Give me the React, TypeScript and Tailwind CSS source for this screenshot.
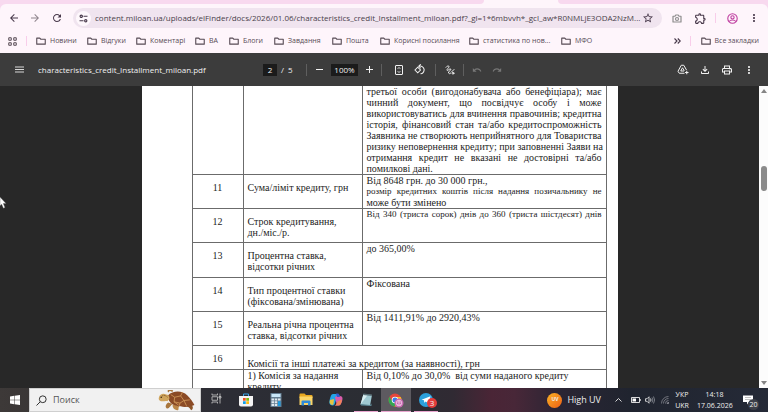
import type { ReactNode } from 'react';
import {
  MdArrowBack,
  MdArrowForward,
  MdMoreVert,
  MdOutlineExtension,
  MdOutlineFileDownload,
  MdOutlinePrint,
  MdRedo,
  MdRefresh,
  MdStarBorder,
  MdUndo,
} from 'react-icons/md';

const FolderIcon = () => (
  <svg viewBox="0 0 20 16" className="h-2 w-2.5 shrink-0" fill="none" stroke="#574b55" strokeWidth="2.2">
    <path d="M1.5 2.2h6l2.2 2.3h8.8v9.8h-17z" strokeLinejoin="round" />
  </svg>
);

const bookmarks = [
  { label: 'Новини', width: 'w-[51px]' },
  { label: 'Відгуки', width: 'w-[49px]' },
  { label: 'Коментарі', width: 'w-[59px]' },
  { label: 'ВА', width: 'w-[34px]' },
  { label: 'Блоги', width: 'w-[45px]' },
  { label: 'Завдання', width: 'w-[58px]' },
  { label: 'Пошта', width: 'w-[48px]' },
  { label: 'Корисні посилання', width: 'w-[89px]' },
  { label: 'статистика по нов...', width: 'w-[92px]' },
  { label: 'МФО', width: 'w-[51px]' },
];

const BrowserHeader = () => (
  <header className="bg-[#f8d9ef] text-[#574b55]">
    <div className="flex h-1 bg-[#fef5fb]">
      <div className="w-[63%] rounded-br-[4px] bg-[#f8d9ef]" />
      <div className="w-[74px]" />
      <div className="flex-1 rounded-bl-[4px] bg-[#f8d9ef]" />
    </div>
    <div className="rounded-t-[6px] bg-[#fef5fb]">
      <div className="flex h-[28px] items-center pl-2 pr-2">
        <button aria-label="Back" className="mr-2 w-[13px] text-[#47384a]"><MdArrowBack size={12} /></button>
        <button aria-label="Forward" className="mr-[9px] w-[13px] text-[#8f858d]"><MdArrowForward size={12} /></button>
        <button aria-label="Reload" className="mr-[9px] w-[13px] text-[#47384a]"><MdRefresh size={12} /></button>
        <div className="flex h-5 flex-1 items-center rounded-full bg-[#f0e4ef] pl-[3px] pr-2">
          <button aria-label="Site information" className="flex size-[15px] items-center justify-center rounded-full bg-[#fef8fc]">
            <svg viewBox="0 0 18 18" className="size-[9px]" fill="none" stroke="#47384a" strokeWidth="2.2">
              <circle cx="4.5" cy="4.5" r="2.3" />
              <path d="M9 4.5h8M1 13.5h8" />
              <circle cx="13.5" cy="13.5" r="2.3" />
            </svg>
          </button>
          <input
            aria-label="Address"
            defaultValue="content.miloan.ua/uploads/elFinder/docs/2026/01.06/characteristics_credit_Installment_miloan.pdf?_gl=1*6mbvvh*_gcl_aw*R0NMLjE3ODA2NzM..."
            className="ml-1 min-w-0 flex-1 bg-transparent text-[8px] text-[#4a3f4b] outline-none"
          />
          <button aria-label="Bookmark this page" className="text-[#47384a]"><MdStarBorder size={12} /></button>
        </div>
        <button aria-label="Screenshot" className="ml-[10px]">
          <svg viewBox="0 0 20 18" className="h-[9px] w-[10px]" fill="none" stroke="#8d8d8d" strokeWidth="2.4">
            <path d="M2 4.5h4l1.500-2.500h5L14 4.500h4v11.500H2z" strokeLinejoin="round" />
            <circle cx="10" cy="10" r="3" />
          </svg>
        </button>
        <button aria-label="Extensions" className="ml-[12px] text-[#47384a]"><MdOutlineExtension size={13} /></button>
        <span className="ml-2 h-[10px] w-px bg-[#f8cdea]" />
        <button aria-label="Profile" className="ml-[11px]">
          <svg viewBox="0 0 24 24" className="size-[11px]" fill="none" stroke="#bf3fa0" strokeWidth="2.4">
            <circle cx="12" cy="12" r="10.3" />
            <circle cx="12" cy="9.5" r="3.6" />
            <path d="M4.500 18.500c3.500-4.200 11.500-4.200 15 0" />
          </svg>
        </button>
        <button aria-label="Menu" className="ml-[10px] text-[#47384a]"><MdMoreVert size={12} /></button>
      </div>
      <nav aria-label="Bookmarks" className="flex h-[21px] items-start pl-2 pr-[9px] pt-px text-[7px] leading-4">
        <button aria-label="Apps" className="mr-[9px] flex h-4 items-center">
          <svg viewBox="0 0 18 18" className="size-[9px]" fill="none" stroke="#574b55" strokeWidth="2">
            <path d="M1.500 1.500h5v5h-5zM11.500 1.500h5v5h-5zM1.500 11.500h5v5h-5zM11.500 11.500h5v5h-5z" />
          </svg>
        </button>
        <span className="mr-[9px] mt-[3px] h-[10px] w-px bg-[#f8cdea]" />
        {bookmarks.map(({ label, width }) => (
          <a key={label} href="#bookmark" className={`flex h-4 shrink-0 items-center gap-1 whitespace-nowrap ${width}`}>
            <FolderIcon />
            {label}
          </a>
        ))}
        <button aria-label="More bookmarks" className="ml-auto mr-[9px] flex h-4 items-center">
          <svg viewBox="0 0 14 12" className="h-[6px] w-[7px]" fill="none" stroke="#47384a" strokeWidth="2.2">
            <path d="M1 1l5 5-5 5M7.500 1l5 5-5 5" />
          </svg>
        </button>
        <span className="mr-[10px] mt-[3px] h-[10px] w-px bg-[#f8cdea]" />
        <a href="#all" className="flex h-4 items-center gap-1 whitespace-nowrap">
          <FolderIcon />
          Все закладки
        </a>
      </nav>
    </div>
  </header>
);

const Divider = () => <span className="h-3 w-px bg-[#5f5f5f]" />;

const PdfToolbar = () => (
  <div className="flex h-[33px] shrink-0 items-center bg-[#3c3c3c] pl-[15px] pr-[13px] text-[#f1f1f1]">
    <div className="flex w-[248px] items-center gap-[14px]">
      <button aria-label="Toggle sidebar">
        <svg viewBox="0 0 18 14" className="h-[7px] w-[9px]" stroke="#d8d8d8" strokeWidth="2.2">
          <path d="M0 2h18M0 7h18M0 12h18" />
        </svg>
      </button>
      <h1 className="text-[8px] font-medium">characteristics_credit_Installment_miloan.pdf</h1>
    </div>
    <input aria-label="Page" defaultValue="2" className="h-3 w-[14px] bg-[#1b1b1b] text-center text-[8px] outline-none" />
    <span className="ml-1 w-[25px] whitespace-pre text-[8px]">/  5</span>
    <Divider />
    <button aria-label="Zoom out" className="ml-[9px]">
      <svg viewBox="0 0 14 14" className="size-[7px]" stroke="#f1f1f1" strokeWidth="2"><path d="M0 7h14" /></svg>
    </button>
    <input aria-label="Zoom" defaultValue="100%" className="ml-2 h-3 w-[27px] bg-[#1b1b1b] text-center text-[8px] outline-none" />
    <button aria-label="Zoom in" className="ml-2 mr-2">
      <svg viewBox="0 0 14 14" className="size-[7px]" stroke="#f1f1f1" strokeWidth="2"><path d="M0 7h14M7 0v14" /></svg>
    </button>
    <Divider />
    <button aria-label="Fit to page" className="ml-[13px]">
      <svg viewBox="0 0 16 20" className="h-[10px] w-2" fill="none" stroke="#f1f1f1" strokeWidth="2">
        <rect x="1" y="1" width="14" height="18" rx="1" />
        <path d="M5.500 7.500L8 5l2.500 2.500M5.500 12.500L8 15l2.500-2.500" />
      </svg>
    </button>
    <button aria-label="Rotate" className="ml-[11px] mr-[10px]">
      <svg viewBox="0 0 22 22" className="size-[11px]" fill="none" stroke="#f1f1f1" strokeWidth="2.1">
        <path d="M7.500 6.500l5.500 5.500-5.500 5.500L2 12z" />
        <path d="M10 4.500a7.800 7.800 0 1 1 3 15.200M13.500.5L9.500 4.500l4 4" />
      </svg>
    </button>
    <Divider />
    <button aria-label="Draw" className="ml-[9px] mr-2">
      <svg viewBox="0 0 20 20" className="size-[10px]" fill="none" stroke="#f1f1f1" strokeWidth="2" strokeLinecap="round">
        <path d="M2 4.500C4 2 7.500 1 8 3S3 8.500 4 10.500s5.500-4 7.500-2.500-6 5.500-4.500 8 3.500 1 4.500 0" />
        <path d="M13 14l5-5" />
        <circle cx="16" cy="16.5" r="1.8" />
      </svg>
    </button>
    <Divider />
    <button aria-label="Undo" disabled className="ml-2 text-[#777]"><MdUndo size={10} /></button>
    <button aria-label="Redo" disabled className="ml-[10px] text-[#777]"><MdRedo size={10} /></button>
    <div className="ml-auto flex items-center gap-[10px]">
      <button aria-label="Save to Drive">
        <svg viewBox="0 0 24 22" className="h-[11px] w-3" fill="none" stroke="#f1f1f1" strokeWidth="2">
          <path d="M15 18.500H4.500L2 14.500 8.500 2.500h5L19 12" strokeLinejoin="round" />
          <path d="M14 14H7.500L11 7.500l3.500 6M19.500 13.500v7M16 17h7" />
        </svg>
      </button>
      <button aria-label="Download"><MdOutlineFileDownload size={12} /></button>
      <button aria-label="Print"><MdOutlinePrint size={12} /></button>
      <button aria-label="More actions"><MdMoreVert size={12} /></button>
    </div>
  </div>
);

const Line = ({ children, tight = false }: { children: ReactNode; tight?: boolean }) => (
  <span className={`block [text-align-last:justify] ${tight ? 'text-[9px]' : ''}`}>{children}</span>
);

const rows = [
  {
    num: '12',
    label: ['Строк кредитування,', 'дн./міс./р.'],
    value: <Line tight>Від 340 (триста сорок) днів до 360 (триста шістдесят) днів</Line>,
    height: 'h-[34px]',
  },
  { num: '13', label: ['Процентна ставка,', 'відсотки річних'], value: 'до 365,00%', height: 'h-[35px]' },
  { num: '14', label: ['Тип процентної ставки', '(фіксована/змінювана)'], value: 'Фіксована', height: 'h-[34px]' },
  { num: '15', label: ['Реальна річна процентна', 'ставка, відсотки річних'], value: 'Від 1411,91% до 2920,43%', height: 'h-[34px]' },
];

const clientTerms = [
  'третьої особи (вигодонабувача або бенефіціара); має',
  'чинний документ, що посвідчує особу і може',
  'використовуватись для вчинення правочинів; кредитна',
  'історія, фінансовий стан та/або кредитоспроможність',
  'Заявника не створюють неприйнятного для Товариства',
  'ризику неповернення кредиту; при заповненні Заяви на',
  'отримання кредит не вказані не достовірні та/або',
];

const cell = 'border-b border-r border-[#6b6b6b] p-0 align-top';
const numCell = `${cell} pt-[7px] text-center`;
const labelCell = `${cell} pt-[7px] pl-1`;
const valueCell = `${cell} pl-1 pr-1`;

const CreditTable = () => (
  <table className="w-full table-fixed border-separate border-spacing-0 border-l border-[#6b6b6b] whitespace-nowrap">
    <colgroup>
      <col className="w-[51px]" />
      <col className="w-[119px]" />
      <col />
    </colgroup>
    <tbody>
      <tr className="h-[89px]">
        <td className={cell} />
        <td className={cell} />
        <td className={valueCell}>
          {clientTerms.map((line) => (
            <Line key={line}>{line}</Line>
          ))}
          помилкові дані.
        </td>
      </tr>
      <tr className="h-[34px]">
        <td className={numCell}>11</td>
        <td className={labelCell}>Сума/ліміт кредиту, грн</td>
        <td className={valueCell}>
          Від 8648 грн. до 30 000 грн.,
          <Line tight>розмір кредитних коштів після надання позичальнику не</Line>
          може бути змінено
        </td>
      </tr>
      {rows.map(({ num, label, value, height }) => (
        <tr key={num} className={height}>
          <td className={numCell}>{num}</td>
          <td className={labelCell}>
            {label[0]}
            <br />
            {label[1]}
          </td>
          <td className={valueCell}>{value}</td>
        </tr>
      ))}
      <tr className="h-6">
        <td className={numCell}>16</td>
        <td colSpan={2} className="border-b border-r border-[#6b6b6b] p-0 pl-1 align-bottom">
          Комісії та інші платежі за кредитом (за наявності), грн
        </td>
      </tr>
      <tr className="h-[34px]">
        <td className={cell} />
        <td className={`${cell} pl-1`}>
          1) Комісія за надання
          <br />
          кредиту
        </td>
        <td className={`${valueCell} whitespace-pre`}>Від 0,10% до 30,0%  від суми наданого кредиту</td>
      </tr>
    </tbody>
  </table>
);

const Viewer = () => (
  <main className="relative flex min-h-0 flex-1 bg-[#282828]">
    <div className="flex-1 overflow-hidden">
      <div className="mx-auto w-[476px] bg-white pl-[50px] pr-[11px] font-['Liberation_Serif',serif] text-[10px] leading-[11px] text-[#1c1c1c]">
        <CreditTable />
      </div>
    </div>
    <div className="flex w-[9px] flex-col items-center bg-[#fcfcfc] py-[3px]">
      <svg viewBox="0 0 6 4" className="h-1 w-[6px] shrink-0" fill="#858585"><path d="M0 4l3-4 3 4z" /></svg>
      <div className="w-full flex-1 pt-[73px]">
        <div className="mx-auto h-[25px] w-[6px] rounded-full bg-[#8b8b8b]" />
      </div>
      <svg viewBox="0 0 6 4" className="h-1 w-[6px] shrink-0" fill="#858585"><path d="M0 0l3 4 3-4z" /></svg>
    </div>
    {/* mouse pointer */}
    <svg viewBox="0 0 7 12" className="absolute left-0 top-[111px] h-3 w-[7px]">
      <path d="M0 0l6 6.500H3.300L5 10.500l-1.600.8-1.800-4L0 8.800z" fill="#fff" stroke="#555" strokeWidth=".4" />
    </svg>
  </main>
);

interface TaskProps {
  name: string;
  open?: boolean;
  active?: boolean;
  children: ReactNode;
}

const Task = ({ name, open = false, active = false, children }: TaskProps) => (
  <button
    aria-label={name}
    className={`flex w-[30px] flex-col items-center justify-between pt-[5px] ${active ? 'bg-[#5d5a60]' : ''}`}
  >
    {children}
    <span className={`h-px ${active ? 'w-full' : 'w-6'} ${open ? 'bg-[#e9a6cf]' : ''}`} />
  </button>
);

const Turtle = () => (
  <svg viewBox="0 0 114 64" className="h-[21px] w-[38px]">
    <path d="M30 38c-8 6-10 14-4 18 8 2 10-8 18-13z" fill="#a9763d" />
    <path d="M78 46c8 4 16 4 22 16 8-6 8-14-6-22z" fill="#8b5529" />
    <path d="M44 44c-2 8 4 16 14 18 6 0 2-8 6-14z" fill="#bb8748" />
    <path d="M30 16c14-14 42-16 58 0 10 10 18 20 22 30-12 6-36 8-54 2-16-4-28-14-26-32z" fill="#8a4a25" />
    <path d="M38 14l12 8-2 14 14 10M50 22l18-4 10 14-12 8-18-4M68 18l6-12M78 32l18-2M66 40l-2 8M78 32l8 16" fill="none" stroke="#d39a5a" strokeWidth="2.5" />
    <path d="M2 22c2-10 14-14 22-8 6 0 10 4 10 12l-6 8c-8-2-12 2-20 0-6-2-8-6-6-12z" fill="#d0a55d" />
    <path d="M12 18c6-4 12 0 16 4" fill="none" stroke="#7f5a2b" strokeWidth="3" strokeDasharray="3 2" />
    <circle cx="9" cy="22" r="2.5" fill="#3b2a18" />
    <path d="M32 6c-4-6 4-8 12-2" fill="none" stroke="#a9763d" strokeWidth="5" />
  </svg>
);

const Taskbar = () => (
  <footer className="flex h-6 shrink-0 bg-[linear-gradient(90deg,#3d3938_0%,#353233_12%,#2c2d35_30%,#2b2d33_50%,#302a33_59%,#4a2536_64%,#482738_67%,#2a2534_73%,#20242f_82%,#252a37_100%)] text-[#efefef]">
    <button aria-label="Start" className="flex w-[29px] items-center justify-center">
      <svg viewBox="0 0 20 20" className="size-[10px]" fill="#fff">
        <path d="M0 3l8.500-1.300v7.800H0zM9.500 1.500L20 0v9.500H9.500zM0 10.500h8.500v7.800L0 17zM9.500 10.500H20V20L9.500 18.500z" />
      </svg>
    </button>
    <label className="flex w-[172px] items-center border border-[#cfcfcf] bg-[#f1f1f1] pl-[6px] pr-1">
      <svg viewBox="0 0 22 22" className="size-[11px] shrink-0" fill="none" stroke="#333" strokeWidth="2">
        <circle cx="13.5" cy="8.5" r="6.8" />
        <path d="M8.700 13.300L1 21" />
      </svg>
      <input
        aria-label="Поиск"
        placeholder="Поиск"
        className="ml-[6px] min-w-0 flex-1 bg-transparent text-[9px] text-[#555] outline-none placeholder:text-[#555]"
      />
      <Turtle />
    </label>
    <Task name="Task view">
      <svg viewBox="0 0 22 22" className="size-[11px]" fill="none" stroke="#c9c9c9" strokeWidth="1.6">
        <path d="M2 1v3h11V1M2 21v-3h11v3M2 7.500h11v7H2zM18 1v20M16 7h4v3h-4z" />
      </svg>
    </Task>
    <Task name="Store">
      <svg viewBox="0 0 28 28" className="size-[14px]">
        <path d="M9 7V2h10v5" fill="none" stroke="#3ba4e8" strokeWidth="2" />
        <path d="M0 6h28v17q0 4-4 4H4q-4 0-4-4z" fill="#f4f4f4" />
        <path d="M8 10h5.500v5.500H8z" fill="#f05123" />
        <path d="M14.500 10H20v5.500h-5.500z" fill="#7fba0d" />
        <path d="M8 16.500h5.500V22H8z" fill="#109fe8" />
        <path d="M14.500 16.500H20V22h-5.500z" fill="#fdb90f" />
      </svg>
    </Task>
    <Task name="Calculator">
      <svg viewBox="0 0 24 28" className="h-[14px] w-3">
        <path d="M1 0h22v28H1z" fill="#647e92" />
        <path d="M3 2h18v6H3z" fill="#c9e7f8" />
        <path d="M3 11h5v4H3zM9.500 11h5v4h-5zM3 16.500h5v4H3zM9.500 16.500h5v4h-5zM3 22h5v4H3zM9.500 22h5v4h-5zM16 11h5v4h-5z" fill="#dfe9ef" />
        <path d="M16 16.500h5V26h-5z" fill="#1b9de2" />
      </svg>
    </Task>
    <Task name="Explorer">
      <svg viewBox="0 0 28 26" className="h-[13px] w-[14px]">
        <path d="M1 3q0-2 2-2h8l3 3h11q2 0 2 2v4H1z" fill="#e8a820" />
        <path d="M1 7h26v17H1z" fill="#fbd567" />
        <path d="M5 25v-8q0-2 2-2h14q2 0 2 2v8h-5v-5h-8v5z" fill="#2f8bd8" />
      </svg>
    </Task>
    <Task name="Copilot">
      <svg viewBox="0 0 28 26" className="h-[13px] w-[14px]">
        <path d="M8 2h9q3 0 4 4l1 3h-6l-5 14q-1 2-4 2-5 0-6-4C0 16 3 8 4 5q1-3 4-3z" fill="#23a5e8" />
        <path d="M2 14l8-2-1 10q-2 3-5 1-4-3-2-9z" fill="#e6c540" />
        <path d="M12 9q1-3 4-3h6q5 0 5 5c0 4-2 9-4 12q-1 2-4 2h-8q3 0 4-4z" fill="#da5cad" />
        <path d="M17 17l9-4q-1 7-3 10-1 2-4 2h-8q3 0 4-4z" fill="#f18457" />
        <path d="M14 1h4q2 0 3 4l1 3h-6z" fill="#3458cf" />
      </svg>
    </Task>
    <Task name="Notepad" open>
      <svg viewBox="0 0 28 28" className="size-[14px]">
        <path d="M9 2l17 2-4 21-19-2z" fill="#9fc9d2" />
        <path d="M9 2l9 1L3 23z" fill="#d7edf0" />
        <path d="M9 1l17 2v3L8 4z" fill="#586d75" />
        <path d="M3 22l19 2 3-3v5L4 25z" fill="#5c8896" />
      </svg>
    </Task>
    <Task name="Chrome" open active>
      <svg viewBox="0 0 32 30" className="h-[15px] w-4">
        <circle cx="14" cy="14" r="13" fill="#e5463b" />
        <path d="M2.700 7.500A13 13 0 0 0 13 27l5-9-9-1z" fill="#32a852" />
        <path d="M14 8h11.500A13 13 0 0 1 13 27l6-10z" fill="#fbc11d" />
        <circle cx="14" cy="14" r="6.5" fill="#fff" />
        <circle cx="14" cy="14" r="5" fill="#3b7de9" />
        <circle cx="22" cy="20" r="9" fill="#c669b0" />
        <circle cx="22" cy="20" r="5.5" fill="none" stroke="#f8d9ef" strokeWidth="1.5" />
        <circle cx="22" cy="18.5" r="2" fill="none" stroke="#f8d9ef" strokeWidth="1.3" />
        <path d="M18 24q4-4 8 0" fill="none" stroke="#f8d9ef" strokeWidth="1.3" />
      </svg>
    </Task>
    <Task name="Telegram" open>
      <span className="relative">
        <svg viewBox="0 0 28 28" className="size-[14px]">
          <circle cx="14" cy="14" r="14" fill="#2ba0dc" />
          <path d="M5 13.500L23 6.500l-3.500 15-6-4.500-3 2.500-.5-5z" fill="#fff" />
        </svg>
        <span className="absolute -right-1 top-[5px] flex size-[10px] items-center justify-center rounded-full bg-[#e23b3b] text-[8px] leading-none">
          3
        </span>
      </span>
    </Task>
    <div className="ml-auto flex items-center">
      <button className="mr-[14px] flex items-center gap-[5px] whitespace-nowrap text-[9px]">
        <span className="flex size-[15px] items-center justify-center rounded-full bg-[linear-gradient(135deg,#fbb324,#ee5f16)] text-[5px] font-bold">
          UV
        </span>
        High UV
      </button>
      <button aria-label="Hidden icons" className="mr-[9px]">
        <svg viewBox="0 0 14 8" className="h-1 w-[7px]" fill="none" stroke="#efefef" strokeWidth="1.8"><path d="M1 7l6-6 6 6" /></svg>
      </button>
      <svg viewBox="0 0 20 12" className="mr-1 h-[6px] w-[10px]">
        <path d="M1 1h16v10H1zM18.500 4v4" fill="none" stroke="#efefef" strokeWidth="1.8" />
        <path d="M3 3h7v6H3z" fill="#fff" />
      </svg>
      <svg viewBox="0 0 20 16" className="mr-[6px] h-2 w-[10px]" fill="none" stroke="#efefef" strokeWidth="1.6">
        <path d="M1 5.500h3L8 1.500v13L4 10.500H1zM11 5q2 3 0 6" />
        <path d="M14 3q3.500 5 0 10M17 1q4.500 7 0 14" stroke="#8d9099" />
      </svg>
      <svg viewBox="0 0 16 16" className="mr-[6px] size-2" fill="none" stroke="#85878f" strokeWidth="1.6">
        <path d="M1 15A14 14 0 0 1 15 1M5 15A10 10 0 0 1 15 5M9 15a6 6 0 0 1 6-6" />
        <path d="M12 15l3-3v3z" fill="#efefef" />
      </svg>
      <button className="w-[14px] text-[7px] leading-[11px]">УКР<br />UKR</button>
      <button className="mx-2 w-[35px] whitespace-nowrap text-[7px] leading-[11px]">14:18<br />17.06.2026</button>
      <button aria-label="Notifications" className="relative mr-[9px] h-6 w-[19px]">
        <svg viewBox="0 0 20 20" className="ml-[3px] size-[10px]" fill="#fff">
          <path d="M0 1h20v13h-8l-4 5v-5H0z" />
          <path d="M4 5h12M4 9h12" stroke="#aaa" strokeWidth="1.5" />
        </svg>
        <span className="absolute bottom-[2px] right-0 flex size-[11px] items-center justify-center rounded-full bg-[#3d4048] text-[7px] leading-none">
          20
        </span>
      </button>
    </div>
  </footer>
);

export default function App() {
  return (
    <div className="flex h-screen flex-col overflow-hidden font-['Open_Sans','Noto_Sans',sans-serif]">
      <BrowserHeader />
      <PdfToolbar />
      <Viewer />
      <Taskbar />
    </div>
  );
}
